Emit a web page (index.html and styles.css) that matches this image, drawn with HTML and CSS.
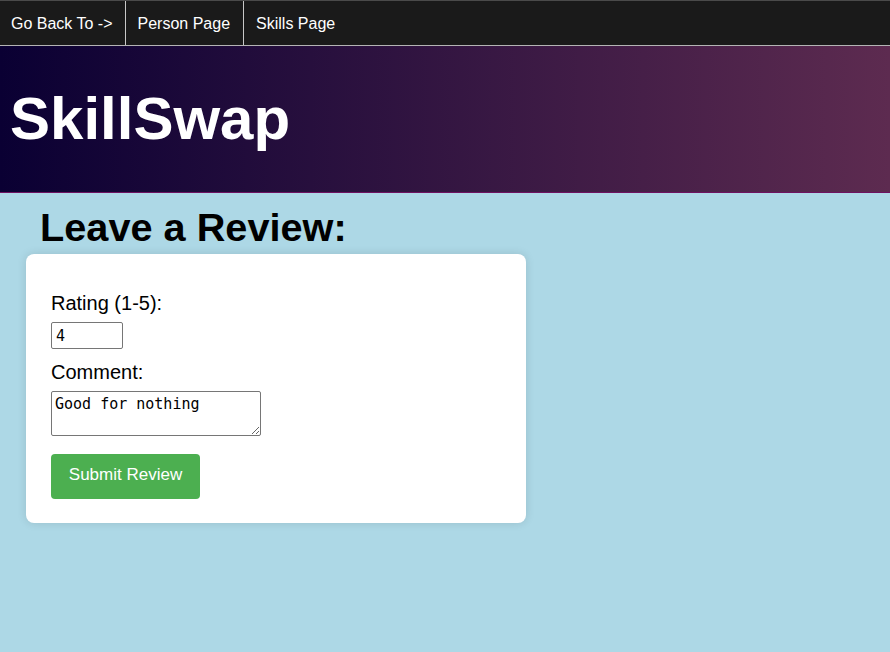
FILE: index.html
```html
<!DOCTYPE html>
<html>
<head>
<meta charset="utf-8">
<title>SkillSwap</title>
<link rel="stylesheet" href="styles.css">
</head>
<body>
<nav class="topnav">
  <a class="nav-link" href="#">Go Back To -&gt;</a>
  <a class="nav-link" href="#">Person Page</a>
  <a class="nav-link" href="#">Skills Page</a>
</nav>
<header class="banner">
  <h1 class="brand">SkillSwap</h1>
</header>
<main class="content">
  <h2 class="page-title">Leave a Review:</h2>
  <form class="review-card">
    <label class="field-label" for="rating">Rating (1-5):</label>
    <input class="rating-input" id="rating" type="text" value="4">
    <label class="field-label" for="comment">Comment:</label>
    <textarea class="comment-input" id="comment">Good for nothing</textarea>
    <button class="submit-btn" type="button">Submit Review</button>
  </form>
</main>
</body>
</html>
```
FILE: styles.css
```css
html, body {
  margin: 0;
  padding: 0;
}
body {
  background: #add8e6;
  font-family: "Liberation Sans", Arial, sans-serif;
  color: #000;
  min-height: 652px;
}
.topnav {
  display: flex;
  height: 44px;
  background: #1a1a1a;
  border-top: 1px solid #4a4a4a;
  border-bottom: 1px solid #b4b4b4;
}
.nav-link {
  display: flex;
  align-items: center;
  padding: 2px 13px 0 12px;
  color: #fff;
  text-decoration: none;
  font-size: 16px;
  border-right: 1px solid #c8c8c8;
}
.nav-link:first-child {
  padding-left: 11px;
  padding-right: 12px;
}
.nav-link:last-child {
  border-right: none;
}
.banner {
  height: 146px;
  background: linear-gradient(to right, #0a0033, #5d2b50);
  border-bottom: 1px solid #6e1260;
  display: flex;
  align-items: center;
}
.brand {
  margin: 0 0 0 10px;
  color: #fff;
  font-size: 60px;
  font-weight: bold;
  line-height: 1;
}
.content {
  padding: 11px 0 0 26px;
}
.page-title {
  margin: 0 0 4px 14px;
  font-size: 39.7px;
  font-weight: bold;
  line-height: 46px;
}
.review-card {
  box-sizing: border-box;
  width: 500px;
  background: #fff;
  border-radius: 8px;
  box-shadow: 0 0 10px rgba(0, 0, 0, 0.12);
  padding: 38px 25px 24px;
  display: flex;
  flex-direction: column;
  align-items: flex-start;
}
.field-label {
  font-size: 20px;
  line-height: 23px;
  margin-bottom: 7px;
}
.rating-input {
  box-sizing: border-box;
  width: 72px;
  height: 27px;
  font-family: "DejaVu Sans Mono", "Liberation Mono", monospace;
  font-size: 15px;
  padding: 2px 4px;
  border: 1px solid #767676;
  border-radius: 2px;
  margin-bottom: 12px;
}
.comment-input {
  box-sizing: border-box;
  width: 210px;
  height: 45px;
  font-family: "DejaVu Sans Mono", "Liberation Mono", monospace;
  font-size: 15px;
  line-height: 18px;
  padding: 3px 3px;
  border: 1px solid #767676;
  border-radius: 2px;
  margin: 0 0 18px;
  resize: both;
}
.submit-btn {
  width: 149px;
  height: 45px;
  padding: 0 0 3px;
  background: #4caf50;
  color: #fff;
  border: none;
  border-radius: 4px;
  font-family: "Liberation Sans", Arial, sans-serif;
  font-size: 17px;
  cursor: pointer;
}
```
